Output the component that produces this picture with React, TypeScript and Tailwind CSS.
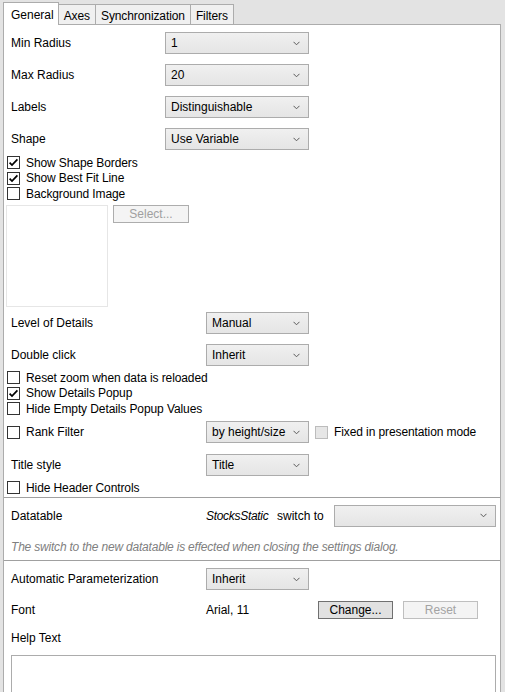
import React from "react";

const FONT = { fontFamily: '"Liberation Sans", Arial, sans-serif' };

function Chevron() {
  return (
    <svg width="7" height="5" viewBox="0 0 7 5" className="shrink-0">
      <path d="M0.5 0.8 L3.5 3.8 L6.5 0.8" fill="none" stroke="#5a5a5a" strokeWidth="1" />
    </svg>
  );
}

function Dropdown({ value, width }: { value: string; width: string }) {
  return (
    <div
      className={`${width} h-[22px] shrink-0 flex items-center justify-between pl-[5px] pr-[8px] border border-[#acacac] bg-linear-to-b from-[#f0f0f0] to-[#e5e5e5] text-black`}
    >
      <span>{value}</span>
      <Chevron />
    </div>
  );
}

function Box({ checked, disabled }: { checked?: boolean; disabled?: boolean }) {
  return (
    <div
      className={`w-[13px] h-[13px] shrink-0 border flex items-center justify-center ${
        disabled ? "border-[#bcbcbc] bg-[#e6e6e6]" : "border-[#333333] bg-white"
      }`}
    >
      {checked && (
        <svg width="11" height="11" viewBox="0 0 11 11">
          <path d="M1.6 5.6 L4 8 L9.4 2.3" fill="none" stroke="#000" strokeWidth="1.7" />
        </svg>
      )}
    </div>
  );
}

function Check({ label, checked }: { label: string; checked?: boolean }) {
  return (
    <div className="h-[15.5px] flex items-center pl-[3px] gap-[6px]">
      <Box checked={checked} />
      <span className="tracking-[-0.1px]">{label}</span>
    </div>
  );
}

function DropRow({
  label,
  value,
  wide,
  mt,
}: {
  label: string;
  value: string;
  wide?: boolean;
  mt: string;
}) {
  return (
    <div className={`${mt} h-[22px] flex items-center pl-[7px]`}>
      <span className={wide ? "w-[154px] shrink-0" : "w-[195px] shrink-0"}>{label}</span>
      <Dropdown value={value} width={wide ? "w-[144px]" : "w-[103px]"} />
    </div>
  );
}

function Tab({ label, active }: { label: string; active?: boolean }) {
  if (active) {
    return (
      <div className="relative z-10 -mb-px h-[23px] pl-[7px] pr-[4px] pt-[3px] bg-white border-t border-l border-r border-[#acacac]">
        {label}
      </div>
    );
  }
  return (
    <div className="h-[20px] -ml-px px-[5px] pt-[2px] bg-[#f0f0f0] border-t border-l border-r border-[#acacac] tracking-[-0.1px]">
      {label}
    </div>
  );
}

export default function App() {
  return (
    <div className="w-[505px] h-[692px] overflow-hidden bg-[#e3e3e3] text-[12px] text-black" style={FONT}>
      {/* Tab strip */}
      <div className="h-[24px] flex items-end pl-[3px]">
        <Tab label="General" active />
        <Tab label="Axes" />
        <Tab label="Synchronization" />
        <Tab label="Filters" />
      </div>

      {/* Panel */}
      <div className="ml-[3px] w-[498px] h-[700px] border border-[#acacac] bg-white flex flex-col">
        <DropRow label="Min Radius" value="1" wide mt="mt-[7px]" />
        <DropRow label="Max Radius" value="20" wide mt="mt-[10px]" />
        <DropRow label="Labels" value="Distinguishable" wide mt="mt-[10px]" />
        <DropRow label="Shape" value="Use Variable" wide mt="mt-[10px]" />

        <div className="mt-[5px]">
          <Check label="Show Shape Borders" checked />
          <Check label="Show Best Fit Line" checked />
          <Check label="Background Image" />
        </div>

        <div className="mt-[3.5px] flex items-start pl-[2px]">
          <div className="w-[102px] h-[102px] border border-[#e6e6e6]" />
          <div className="ml-[5px] w-[76px] h-[18px] border border-[#adadad] bg-[#f4f4f4] text-[#a0a0a0] flex items-center justify-center">
            Select...
          </div>
        </div>

        <DropRow label="Level of Details" value="Manual" mt="mt-[5px]" />
        <DropRow label="Double click" value="Inherit" mt="mt-[10px]" />

        <div className="mt-[4px]">
          <Check label="Reset zoom when data is reloaded" />
          <Check label="Show Details Popup" checked />
          <Check label="Hide Empty Details Popup Values" />
        </div>

        {/* Rank filter row */}
        <div className="mt-[4.5px] h-[22px] flex items-center">
          <div className="w-[202px] shrink-0 flex items-center pl-[3px] gap-[6px]">
            <Box />
            <span>Rank Filter</span>
          </div>
          <Dropdown value="by height/size" width="w-[103px]" />
          <div className="ml-[6px] flex items-center gap-[6px]">
            <Box disabled />
            <span className="tracking-[-0.1px]">Fixed in presentation mode</span>
          </div>
        </div>

        <DropRow label="Title style" value="Title" mt="mt-[11px]" />

        <div className="mt-[4px]">
          <Check label="Hide Header Controls" />
        </div>

        <div className="mt-[1.5px] h-px bg-[#a0a0a0]" />

        {/* Datatable */}
        <div className="mt-[7px] h-[22px] flex items-center pl-[7px]">
          <span className="w-[195px] shrink-0">Datatable</span>
          <span className="w-[71px] shrink-0 italic tracking-[-0.3px]">StocksStatic</span>
          <span className="w-[57px] shrink-0">switch to</span>
          <Dropdown value="" width="w-[162px]" />
        </div>
        <div className="mt-[12px] h-[16px] flex items-center pl-[7px] italic text-[#808080] tracking-[-0.2px] whitespace-nowrap">
          The switch to the new datatable is effected when closing the settings dialog.
        </div>

        <div className="mt-[5px] h-px bg-[#a0a0a0]" />

        <DropRow label="Automatic Parameterization" value="Inherit" mt="mt-[8px]" />

        <div className="mt-[11px] h-[18px] flex items-center pl-[7px]">
          <span className="w-[195px] shrink-0">Font</span>
          <span className="w-[112px] shrink-0">Arial, 11</span>
          <div className="w-[75px] h-[18px] border border-[#707070] bg-[#e1e1e1] flex items-center justify-center">
            Change...
          </div>
          <div className="ml-[10px] w-[75px] h-[18px] border border-[#bfbfbf] bg-[#f4f4f4] text-[#a3a3a3] flex items-center justify-center">
            Reset
          </div>
        </div>

        <div className="mt-[11px] h-[16px] flex items-center pl-[7px]">Help Text</div>

        <div className="mt-[9px] ml-[7px] w-[485px] h-[120px] border border-[#acacac] bg-white" />
      </div>
    </div>
  );
}
